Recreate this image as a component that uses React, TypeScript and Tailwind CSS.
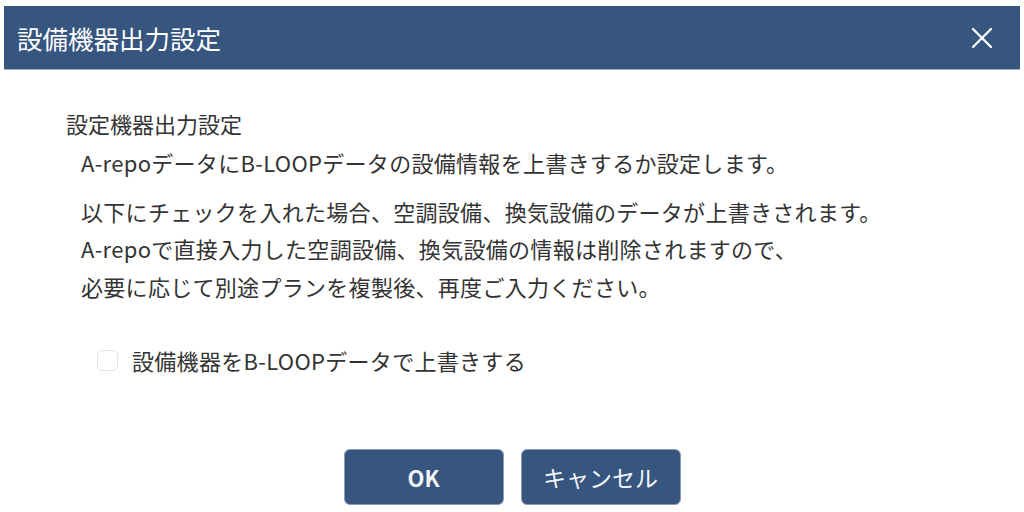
import { X } from "lucide-react";

const font = { fontFamily: '"Noto Sans CJK JP", "Noto Sans", sans-serif' };

export default function App() {
  return (
    <div className="h-[512px] w-[1024px] bg-white px-[4px] pt-[6px]" style={font}>
      <div className="flex h-16 items-center justify-between border-b border-[#9fb0c8] bg-[#36557f] pl-[13px] pr-[20px]">
        <h1 className="text-[25.5px] leading-none text-white">設備機器出力設定</h1>
        <X className="h-[36px] w-[36px] text-white" strokeWidth={1.5} />
      </div>

      <div className="pl-[62px] pt-[37px] text-[22px] leading-[32px] text-[#333]">
        <p>設定機器出力設定</p>
        <div className="pl-[15px] tracking-[0.3px]">
          <p className="mt-[7px]">A-repoデータにB-LOOPデータの設備情報を上書きするか設定します。</p>
          <p className="mt-[17px]">以下にチェックを入れた場合、空調設備、換気設備のデータが上書きされます。</p>
          <p className="mt-[5px]">A-repoで直接入力した空調設備、換気設備の情報は削除されますので、</p>
          <p className="mt-[6px]">必要に応じて別途プランを複製後、再度ご入力ください。</p>
        </div>

        <label className="mt-[42px] ml-[31px] flex items-center gap-[14px] tracking-[0.3px]">
          <span className="h-[21px] w-[21px] shrink-0 rounded-[5px] border border-[#e3e3e3] bg-white" />
          <span>設備機器をB-LOOPデータで上書きする</span>
        </label>
      </div>

      <div className="mt-[73px] flex justify-center gap-[17px]">
        <button className="h-[56px] w-[160px] rounded-[6px] border border-[#8a9db8] bg-[#36557f] text-[22px] font-semibold text-[#f2f4f8]">
          OK
        </button>
        <button className="h-[56px] w-[160px] rounded-[6px] border border-[#8a9db8] bg-[#36557f] text-[23px] font-normal text-[#f2f4f8]">
          キャンセル
        </button>
      </div>
    </div>
  );
}
